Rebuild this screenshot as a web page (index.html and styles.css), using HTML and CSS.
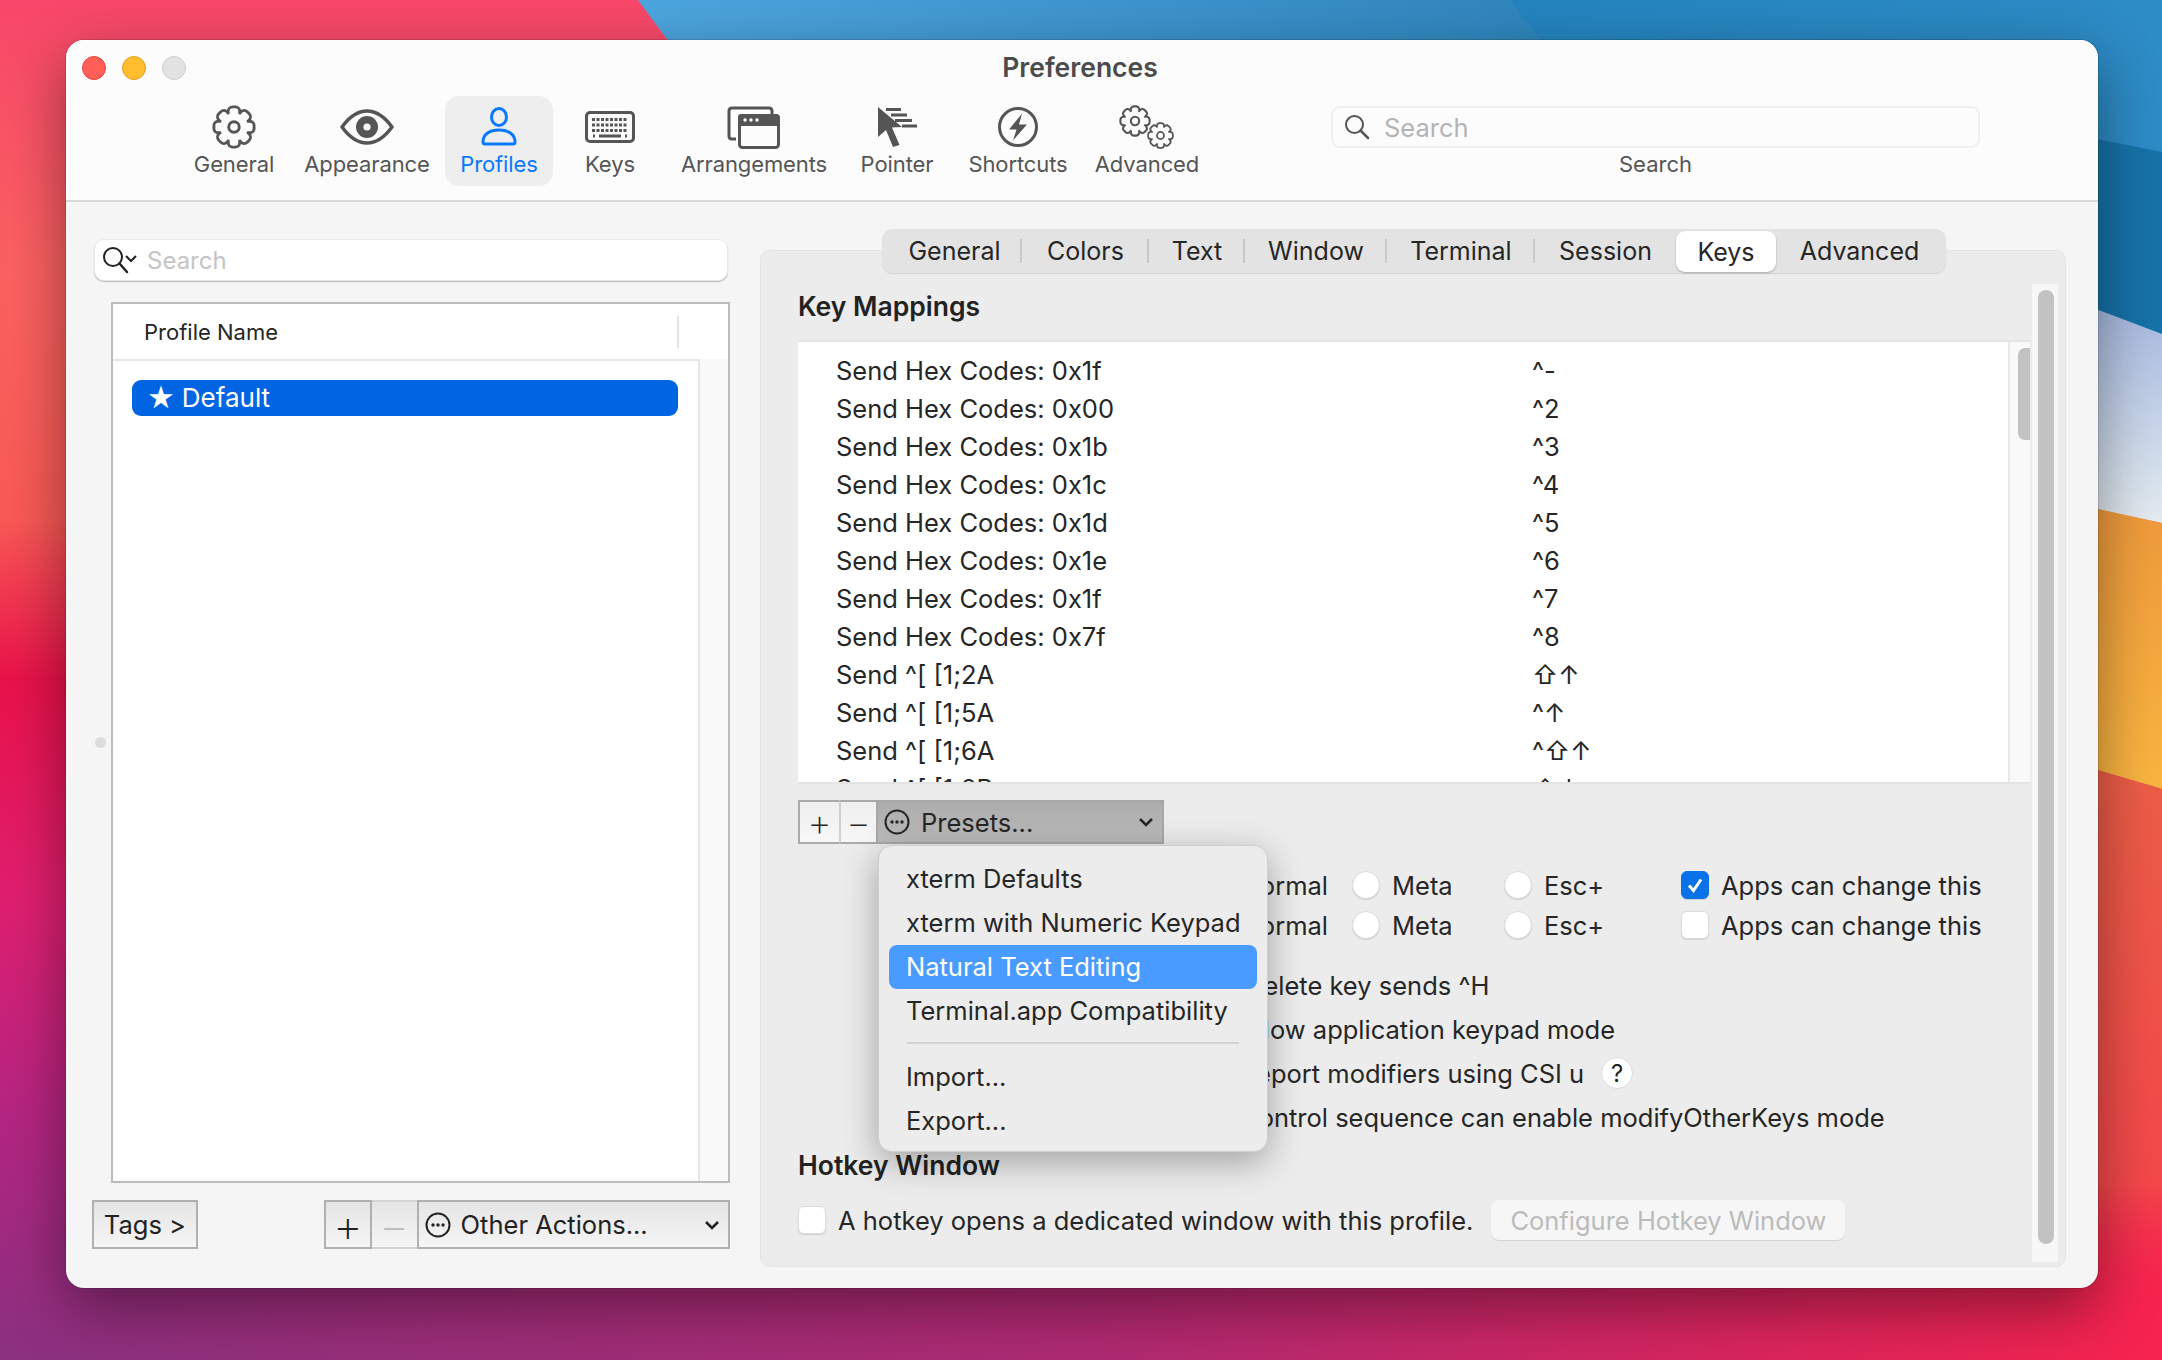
FILE: index.html
```html
<!DOCTYPE html>
<html lang="en">
<head>
    <meta charset="UTF-8">
    <title>Preferences</title>
    <link rel="stylesheet" href="styles.css">
</head>
<body>

<svg class="wallpaper" viewBox="0 0 2162 1360" preserveAspectRatio="none">
    <defs>
        <linearGradient id="w-base" x1="0" y1="0" x2="0" y2="1">
            <stop offset="0" stop-color="#f8476a"/>
            <stop offset=".2" stop-color="#fb6160"/>
            <stop offset=".38" stop-color="#f95a55"/>
            <stop offset=".5" stop-color="#e9124a"/>
            <stop offset=".66" stop-color="#e01f70"/>
            <stop offset=".82" stop-color="#b42582"/>
            <stop offset="1" stop-color="#8a3180"/>
        </linearGradient>
        <linearGradient id="w-hot" x1="0" y1="0" x2="1" y2="0">
            <stop offset="0" stop-color="#f7234e" stop-opacity="0"/>
            <stop offset=".5" stop-color="#f01f5a" stop-opacity=".35"/>
            <stop offset="1" stop-color="#f7234e" stop-opacity="1"/>
        </linearGradient>
        <linearGradient id="w-blue" x1="0" y1="0" x2="1" y2="0">
            <stop offset="0" stop-color="#4da6df"/>
            <stop offset=".7" stop-color="#2b80b8"/>
            <stop offset="1" stop-color="#2b80b8"/>
        </linearGradient>
        <linearGradient id="w-blue2" x1="0" y1="0" x2="1" y2="0">
            <stop offset="0" stop-color="#2484bf"/>
            <stop offset="1" stop-color="#2e8cc6"/>
        </linearGradient>
        <linearGradient id="w-pale" x1="0" y1="0" x2="0" y2="1">
            <stop offset="0" stop-color="#a5b8df"/>
            <stop offset="1" stop-color="#e4ecf1"/>
        </linearGradient>
        <linearGradient id="w-orange" x1="0" y1="0" x2="0" y2="1">
            <stop offset="0" stop-color="#ef9a3c"/>
            <stop offset="1" stop-color="#fab540"/>
        </linearGradient>
        <linearGradient id="w-red" x1="0" y1="0" x2="0" y2="1">
            <stop offset="0" stop-color="#ec5e47"/>
            <stop offset=".7" stop-color="#f4484a" stop-opacity="1"/>
            <stop offset=".92" stop-color="#f7234e" stop-opacity="0"/>
        </linearGradient>
    </defs>
    <rect width="2162" height="1360" fill="url(#w-base)"/>
    <rect y="800" width="2162" height="560" fill="url(#w-hot)"/>
    <polygon points="638,0 760,165 760,340 2162,340 2162,0" fill="url(#w-blue)"/>
    <path d="M1510 0 C1560 70 1620 120 1720 150 L2162 340 L2162 0Z" fill="url(#w-blue2)"/>
    <polygon points="1700,60 2162,152 2162,336 1700,200" fill="#1672a8"/>
    <polygon points="2080,303 2162,334 2162,523 2080,506" fill="url(#w-pale)"/>
    <polygon points="2080,505 2162,523 2162,789 2080,765" fill="url(#w-orange)"/>
    <polygon points="2080,765 2162,789 2162,1360 2080,1360" fill="url(#w-red)"/>
</svg>

<svg class="defs">
    <g id="gear">
        <circle r="14.5"/>
        <rect x="-4.5" y="-19.5" width="9" height="8" rx="3"/>
        <rect x="-4.5" y="-19.5" width="9" height="8" rx="3" transform="rotate(45)"/>
        <rect x="-4.5" y="-19.5" width="9" height="8" rx="3" transform="rotate(90)"/>
        <rect x="-4.5" y="-19.5" width="9" height="8" rx="3" transform="rotate(135)"/>
        <rect x="-4.5" y="-19.5" width="9" height="8" rx="3" transform="rotate(180)"/>
        <rect x="-4.5" y="-19.5" width="9" height="8" rx="3" transform="rotate(225)"/>
        <rect x="-4.5" y="-19.5" width="9" height="8" rx="3" transform="rotate(270)"/>
        <rect x="-4.5" y="-19.5" width="9" height="8" rx="3" transform="rotate(315)"/>
    </g>
    <g id="more">
        <circle cx="13" cy="13" r="11.5" fill="none" stroke="currentColor" stroke-width="2"/>
        <circle cx="8" cy="13" r="1.7" fill="currentColor"/>
        <circle cx="13" cy="13" r="1.7" fill="currentColor"/>
        <circle cx="18" cy="13" r="1.7" fill="currentColor"/>
    </g>
</svg>

<div class="window">
    <header class="header">
        <div class="titlebar">
            <div class="lights">
                <span class="light red"></span>
                <span class="light yellow"></span>
                <span class="light grey"></span>
            </div>
            <div class="title">Preferences</div>
        </div>
        <div class="toolbar">
            <nav class="tools">
                <div class="tool">
                    <svg class="icon gear" width="46" height="46" viewBox="-23 -23 46 46">
                        <use href="#gear" class="gear-edge"/><use href="#gear" class="gear-fill"/><circle class="gear-hub" r="5.5"/>
                    </svg>
                    <span>General</span>
                </div>
                <div class="tool">
                    <svg class="icon" width="54" height="44" viewBox="0 0 54 44">
                        <path d="M2 22 C10 11 18 6 27 6 C36 6 44 11 52 22 C44 33 36 38 27 38 C18 38 10 33 2 22Z" fill="none" stroke="#555" stroke-width="3.5" stroke-linejoin="round"/>
                        <circle cx="27" cy="22" r="11" fill="#555"/>
                        <circle cx="27" cy="22" r="3.6" fill="#fcfcfc"/>
                    </svg>
                    <span>Appearance</span>
                </div>
                <div class="tool active">
                    <svg class="icon" width="38" height="44" viewBox="0 0 38 44">
                        <ellipse cx="19" cy="12" rx="7.5" ry="8.5" fill="none" stroke="#0a78ff" stroke-width="3"/>
                        <path d="M3 37 C3 29 10 25 19 25 C28 25 35 29 35 37 C35 38.500 34.500 39 33 39 L5 39 C3.500 39 3 38.500 3 37Z" fill="none" stroke="#0a78ff" stroke-width="3" stroke-linejoin="round"/>
                    </svg>
                    <span>Profiles</span>
                </div>
                <div class="tool">
                    <svg class="icon" width="50" height="44" viewBox="0 0 50 44">
                        <rect x="1.500" y="7.500" width="47" height="29" rx="3.500" fill="none" stroke="#555" stroke-width="3"/>
                        <path d="M7 14.500 H43 M7 20 H43 M7 25.500 H43" stroke="#555" stroke-width="3" stroke-dasharray="3 1.500" fill="none"/>
                        <path d="M8 31 H10 M14 31 H36 M40 31 H42" stroke="#555" stroke-width="3" fill="none"/>
                    </svg>
                    <span>Keys</span>
                </div>
                <div class="tool">
                    <svg class="icon" width="54" height="44" viewBox="0 0 54 44">
                        <path d="M9 34 H5 Q2 34 2 31 V6 Q2 3 5 3 H42 Q45 3 45 6 V10" fill="none" stroke="#555" stroke-width="3"/>
                        <path d="M14 9 H49 Q53 9 53 13 V21 H11 V12 Q11 9 14 9Z" fill="#555"/>
                        <rect x="12.500" y="10.500" width="39" height="32" rx="3" fill="none" stroke="#555" stroke-width="3"/>
                        <circle cx="18" cy="15" r="1.700" fill="#fff"/><circle cx="24" cy="15" r="1.700" fill="#fff"/><circle cx="30" cy="15" r="1.700" fill="#fff"/>
                    </svg>
                    <span>Arrangements</span>
                </div>
                <div class="tool">
                    <svg class="icon" width="42" height="44" viewBox="0 0 42 44">
                        <path d="M2 2 V32 L10 25 L17 42 L23.500 40 L16 22.500 L26 22Z" fill="#555"/>
                        <path d="M10 4.500 H25 M15 10 H31 M19 15.500 H36 M26 21 H41" stroke="#555" stroke-width="3" fill="none"/>
                    </svg>
                    <span>Pointer</span>
                </div>
                <div class="tool">
                    <svg class="icon" width="44" height="44" viewBox="0 0 44 44">
                        <circle cx="22" cy="22" r="18.500" fill="none" stroke="#555" stroke-width="3"/>
                        <path d="M26 8.500 L13 24.500 H20.500 L17 35.500 L31 19.500 H23Z" fill="#555"/>
                    </svg>
                    <span>Shortcuts</span>
                </div>
                <div class="tool">
                    <svg class="icon" width="56" height="44" viewBox="0 0 56 44">
                        <svg x="0" y="0" width="32" height="32" viewBox="-23 -23 46 46">
                            <use href="#gear" class="gear-edge thin"/><use href="#gear" class="gear-fill"/><circle class="gear-hub" r="6"/>
                        </svg>
                        <svg x="28" y="17" width="27" height="27" viewBox="-23 -23 46 46">
                            <use href="#gear" class="gear-edge thin"/><use href="#gear" class="gear-fill"/><circle class="gear-hub" r="6"/>
                        </svg>
                    </svg>
                    <span>Advanced</span>
                </div>
            </nav>
            <div class="toolbar-search">
                <div class="tb-field">
                    <svg width="26" height="26" viewBox="0 0 26 26">
                        <circle cx="10.500" cy="10.500" r="8.500" fill="none" stroke="#555" stroke-width="2"/>
                        <path d="M16.500 16.500 L24 24" stroke="#555" stroke-width="2.500" stroke-linecap="round"/>
                    </svg>
                    <span>Search</span>
                </div>
                <div class="tb-label">Search</div>
            </div>
        </div>
    </header>

    <div class="content">
        <aside class="profiles">
            <div class="search">
                <svg width="36" height="28" viewBox="0 0 36 28">
                    <circle cx="11" cy="11" r="9" fill="none" stroke="#222" stroke-width="2"/>
                    <path d="M17.500 17.500 L25 26" stroke="#222" stroke-width="2.500" stroke-linecap="round"/>
                    <path d="M24 10 L29 15 L34 10" fill="none" stroke="#222" stroke-width="2"/>
                </svg>
                <span>Search</span>
            </div>
            <div class="table-wrap">
                <span class="split-dot"></span>
                <div class="profile-table">
                    <div class="profile-head"><span>Profile Name</span></div>
                    <div class="profile-body">
                        <div class="profile-list">
                            <div class="profile-row"><span class="star">★</span> Default</div>
                        </div>
                        <div class="profile-gutter"></div>
                    </div>
                </div>
            </div>
            <div class="profile-actions">
                <div class="btn tags">Tags &gt;</div>
                <div class="btn square">+</div>
                <div class="btn square off">−</div>
                <div class="btn actions">
                    <svg class="more" width="26" height="26" viewBox="0 0 26 26"><use href="#more"/></svg>
                    <span>Other Actions...</span>
                    <svg class="chev" width="16" height="12" viewBox="0 0 16 12"><path d="M2 3 L8 9 L14 3" fill="none" stroke="currentColor" stroke-width="2.600"/></svg>
                </div>
            </div>
        </aside>

        <section class="prefs">
            <div class="panel">
                <div class="tabs">
                    <div class="tab sep">General</div>
                    <div class="tab sep">Colors</div>
                    <div class="tab sep">Text</div>
                    <div class="tab sep">Window</div>
                    <div class="tab sep">Terminal</div>
                    <div class="tab">Session</div>
                    <div class="tab selected">Keys</div>
                    <div class="tab">Advanced</div>
                </div>
                <div class="panel-body">
                    <div class="panel-main">
                        <h2 class="heading">Key Mappings</h2>
                        <div class="keymap">
                            <div class="keymap-rows">
                                <div class="key-row"><span>Send Hex Codes: 0x1f</span><span>^-</span></div>
                                <div class="key-row"><span>Send Hex Codes: 0x00</span><span>^2</span></div>
                                <div class="key-row"><span>Send Hex Codes: 0x1b</span><span>^3</span></div>
                                <div class="key-row"><span>Send Hex Codes: 0x1c</span><span>^4</span></div>
                                <div class="key-row"><span>Send Hex Codes: 0x1d</span><span>^5</span></div>
                                <div class="key-row"><span>Send Hex Codes: 0x1e</span><span>^6</span></div>
                                <div class="key-row"><span>Send Hex Codes: 0x1f</span><span>^7</span></div>
                                <div class="key-row"><span>Send Hex Codes: 0x7f</span><span>^8</span></div>
                                <div class="key-row"><span>Send ^[ [1;2A</span><span>⇧↑</span></div>
                                <div class="key-row"><span>Send ^[ [1;5A</span><span>^↑</span></div>
                                <div class="key-row"><span>Send ^[ [1;6A</span><span>^⇧↑</span></div>
                                <div class="key-row"><span>Send ^[ [1;2B</span><span>⇧↓</span></div>
                            </div>
                            <div class="keymap-scroll"><div class="keymap-thumb"></div></div>
                        </div>

                        <div class="presets-bar">
                            <div class="seg plus">+</div>
                            <div class="seg minus">−</div>
                            <div class="presets">
                                <svg class="more" width="26" height="26" viewBox="0 0 26 26"><use href="#more"/></svg>
                                <span>Presets...</span>
                                <svg class="chev" width="16" height="12" viewBox="0 0 16 12"><path d="M2 3 L8 9 L14 3" fill="none" stroke="currentColor" stroke-width="2.600"/></svg>
                            </div>
                            <div class="menu">
                                <div class="menu-item">xterm Defaults</div>
                                <div class="menu-item">xterm with Numeric Keypad</div>
                                <div class="menu-item hl">Natural Text Editing</div>
                                <div class="menu-item">Terminal.app Compatibility</div>
                                <div class="menu-sep"></div>
                                <div class="menu-item">Import...</div>
                                <div class="menu-item">Export...</div>
                            </div>
                        </div>

                        <div class="option-keys">
                            <div class="option-row">
                                <div class="opt-name">Left Option Key: <span>Normal</span></div>
                                <label class="opt"><span class="radio"></span>Meta</label>
                                <label class="opt"><span class="radio"></span>Esc+</label>
                                <label class="opt"><span class="box checked"><svg width="20" height="20" viewBox="0 0 20 20"><path d="M4 10.500 L8.500 15.500 L16 4.500" fill="none" stroke="#fff" stroke-width="3"/></svg></span>Apps can change this</label>
                            </div>
                            <div class="option-row">
                                <div class="opt-name">Right Option Key: <span>Normal</span></div>
                                <label class="opt"><span class="radio"></span>Meta</label>
                                <label class="opt"><span class="radio"></span>Esc+</label>
                                <label class="opt"><span class="box"></span>Apps can change this</label>
                            </div>
                        </div>

                        <div class="flags">
                            <label class="flag delete"><span class="box"></span>Delete key sends ^H</label>
                            <label class="flag"><span class="box"></span>Allow application keypad mode</label>
                            <label class="flag"><span class="box"></span>Report modifiers using CSI u<span class="help">?</span></label>
                            <label class="flag"><span class="box"></span>Control sequence can enable modifyOtherKeys mode</label>
                        </div>

                        <h2 class="heading hotkey">Hotkey Window</h2>
                        <div class="hotkey-row">
                            <label class="opt"><span class="box"></span>A hotkey opens a dedicated window with this profile.</label>
                            <div class="btn-configure">Configure Hotkey Window</div>
                        </div>
                    </div>
                    <div class="panel-scroll"><div class="panel-thumb"></div></div>
                </div>
            </div>
        </section>
    </div>
</div>

</body>
</html>
```

FILE: styles.css
```css
html, body {
    margin: 0;
    height: 1360px;
    overflow: hidden;
}

body {
    position: relative;
    font-family: Inter, "Noto Sans", "DejaVu Sans", sans-serif;
    color: #262626;
    background: #b42582;
}

.wallpaper {
    position: absolute;
    left: 0;
    top: 0;
    width: 2162px;
    height: 1360px;
}

.defs {
    position: absolute;
    width: 0;
    height: 0;
}

.window {
    position: absolute;
    left: 66px;
    top: 40px;
    width: 2032px;
    height: 1248px;
    border-radius: 18px;
    overflow: hidden;
    background: #f5f5f5;
    box-shadow: 0 20px 60px rgba(0, 0, 0, 0.42), 0 0 0 1px rgba(0, 0, 0, 0.12);
}

/* header */
.header {
    height: 160px;
    background: #fcfcfc;
    border-bottom: 2px solid #d8d8d8;
}

.titlebar {
    display: grid;
    grid-template-columns: 1fr auto 1fr;
    align-items: center;
    height: 54px;
    padding-bottom: 2px;
}

.lights {
    display: flex;
    gap: 16px;
    padding: 2px 0 0 16px;
}

.light {
    width: 24px;
    height: 24px;
    border-radius: 50%;
    box-sizing: border-box;
}

.red { background: #ff5f57; border: 1px solid #e2463f; }
.yellow { background: #febc2e; border: 1px solid #dfa023; }
.grey { background: #e2e2e2; border: 1px solid #cfcfcf; }

.title {
    font-size: 26.5px;
    font-weight: 600;
    color: #4b4b4b;
    margin-left: -4px;
}

.toolbar {
    display: flex;
    padding-left: 113px;
}

.tools {
    display: grid;
    grid-template-columns: 110px 156px 108px 114px 174px 112px 130px 128px;
    height: 90px;
}

.tool {
    display: flex;
    flex-direction: column;
    align-items: center;
    padding-top: 9px;
    box-sizing: border-box;
    font-size: 22px;
    letter-spacing: -0.1px;
    color: #555;
    border-radius: 14px;
}

.tool span {
    line-height: 30px;
}

.tool .icon {
    height: 44px;
}

.tool.active {
    background: #eeeeee;
    color: #0a78ff;
}

.gear-edge {
    fill: #555;
    stroke: #555;
    stroke-width: 6;
    stroke-linejoin: round;
}

.gear-fill {
    fill: #fcfcfc;
    stroke: none;
}

.gear-hub {
    fill: none;
    stroke: #555;
    stroke-width: 3;
}

.toolbar-search {
    width: 649px;
    margin-left: 120px;
    padding-top: 10px;
}

.tb-field {
    display: flex;
    align-items: center;
    gap: 14px;
    box-sizing: border-box;
    height: 42px;
    padding-left: 11px;
    border: 2px solid #efefef;
    border-radius: 9px;
    font-size: 25.5px;
    color: #b4b4b4;
}

.tb-label {
    margin-top: 1px;
    line-height: 30px;
    text-align: center;
    font-size: 22px;
    color: #555;
}

/* main area */
.content {
    display: flex;
}

.profiles {
    width: 638px;
    margin-left: 26px;
    padding-top: 37px;
}

.search {
    display: flex;
    align-items: center;
    gap: 9px;
    box-sizing: border-box;
    width: 634px;
    height: 42px;
    margin-left: 2px;
    padding-left: 7px;
    background: #fff;
    border-radius: 10px;
    border: 1px solid #e9e9e9;
    box-shadow: 0 1px 1px #b5b5b5;
    font-size: 24px;
    color: #c4c4c4;
}

.table-wrap {
    display: flex;
    align-items: center;
    margin-top: 21px;
}

.split-dot {
    width: 11px;
    height: 11px;
    margin: 0 5px 0 3px;
    border-radius: 50%;
    background: #dcdcdc;
}

.profile-table {
    display: flex;
    flex-direction: column;
    box-sizing: border-box;
    width: 619px;
    height: 881px;
    background: #fff;
    border: 2px solid #bcbcbc;
}

.profile-head {
    box-sizing: border-box;
    height: 55px;
    padding: 12px 0 0 31px;
    flex: none;
}

.profile-head span {
    display: block;
    width: 533px;
    line-height: 32px;
    font-size: 22px;
    border-right: 2px solid #e4e4e4;
}

.profile-body {
    flex: 1;
    display: flex;
}

.profile-list {
    width: 587px;
    padding: 19px 0 0 19px;
    box-sizing: border-box;
    border-top: 2px solid #e6e6e6;
    border-right: 2px solid #e6e6e6;
}

.profile-gutter {
    flex: 1;
    background: #f9f9f9;
}

.profile-row {
    display: flex;
    align-items: center;
    gap: 7px;
    box-sizing: border-box;
    width: 546px;
    height: 36px;
    padding: 0 0 2px 15px;
    border-radius: 9px;
    background: #0165e3;
    color: #fff;
    font-size: 26px;
}

.star {
    font-family: "DejaVu Sans", sans-serif;
    font-size: 31px;
    line-height: 34px;
}

.profile-actions {
    display: flex;
    margin-top: 17px;
    height: 49px;
    color: #222;
}

.btn {
    display: flex;
    align-items: center;
    box-sizing: border-box;
    height: 49px;
    border: 2px solid #b0b0b0;
    background: linear-gradient(#e5e5e5, #f5f5f5);
    font-size: 25.5px;
}

.tags {
    width: 106px;
    justify-content: center;
    margin-right: 126px;
}

.square {
    width: 48px;
    justify-content: center;
    font-size: 46px;
    font-weight: 200;
}

.square.off {
    width: 45px;
    border: 0;
    border-bottom: 2px solid #d4d4d4;
    border-top: 2px solid #d4d4d4;
    color: #bdbdbd;
}

.actions {
    width: 314px;
    gap: 10px;
    padding-left: 6px;
}

.chev {
    margin-left: auto;
    flex: none;
}

.actions .chev {
    margin-right: 8px;
}

/* right side */
.prefs {
    width: 1306px;
    margin-left: 30px;
}

.panel {
    box-sizing: border-box;
    height: 1017px;
    margin-top: 48px;
    background: #ececec;
    border: 1px solid #e4e4e4;
    border-radius: 10px;
}

.tabs {
    display: grid;
    grid-template-columns: 140px 127px 96px 142px 148px 141px 100px 170px;
    width: 1064px;
    height: 44px;
    margin: -22px 0 0 121px;
    background: #e3e3e3;
    border-radius: 11px;
    box-shadow: 0 1px 1px #d4d4d4;
}

.tab {
    display: flex;
    align-items: center;
    justify-content: center;
    font-size: 25px;
}

.tab:first-child {
    padding-left: 5px;
}

.tab:last-child {
    padding-right: 3px;
}

.tab.sep {
    background: linear-gradient(#c9c9c9, #c9c9c9) right center / 2px 24px no-repeat;
}

.tab.selected {
    margin: 2px 0 1px;
    background: #fff;
    border-radius: 9px;
    box-shadow: 0 1px 2px rgba(0, 0, 0, 0.25);
}

.panel-body {
    display: flex;
}

.panel-main {
    width: 1232px;
    margin-left: 37px;
    padding-top: 16px;
}

.heading {
    margin: 0;
    font-size: 26.5px;
    font-weight: 600;
    line-height: 34px;
    color: #222;
}

.keymap {
    display: flex;
    height: 440px;
    margin-top: 17px;
    overflow: hidden;
    background: #fff;
    border-top: 2px solid #e4e4e4;
    border-bottom: 2px solid #e4e4e4;
}

.keymap-rows {
    width: 1210px;
    padding-top: 10px;
    box-sizing: border-box;
}

.key-row {
    display: grid;
    grid-template-columns: 696px auto;
    height: 38px;
    line-height: 38px;
    padding-left: 38px;
    font-size: 25.5px;
    font-family: Inter, "DejaVu Sans", sans-serif;
}

.keymap-scroll {
    flex: 1;
    padding: 6px 0 0 8px;
    background: #f9f9f9;
    border-left: 2px solid #e9e9e9;
}

.keymap-thumb {
    height: 92px;
    background: #c2c2c2;
    border-radius: 7px 0 0 7px;
}

.presets-bar {
    position: relative;
    display: flex;
    height: 44px;
    margin-top: 16px;
    font-size: 25.5px;
}

.seg {
    display: flex;
    align-items: center;
    justify-content: center;
    box-sizing: border-box;
    border: 2px solid #aaaaaa;
    border-right: 0;
    background: linear-gradient(#efefef, #f7f7f7);
    font-size: 38px;
    font-weight: 200;
}

.seg.plus {
    width: 41px;
}

.seg.minus {
    width: 37px;
    border-left: 2px solid #cfcfcf;
}

.presets {
    display: flex;
    align-items: center;
    gap: 11px;
    box-sizing: border-box;
    width: 288px;
    padding-left: 6px;
    background: linear-gradient(#acacac, #bcbcbc);
    border: 2px solid #a8a8a8;
}

.presets .chev {
    margin-right: 8px;
}

.menu {
    position: absolute;
    left: 80px;
    top: 45px;
    z-index: 5;
    box-sizing: border-box;
    width: 390px;
    height: 307px;
    padding: 11px 10px;
    background: #ececec;
    border-radius: 14px;
    border: 1px solid #cfcfcf;
    box-shadow: 0 10px 36px rgba(0, 0, 0, 0.32);
    font-size: 25.5px;
}

.menu-item {
    height: 44px;
    line-height: 44px;
    padding-left: 17px;
    border-radius: 8px;
}

.menu-item.hl {
    background: #4a9bff;
    color: #fff;
}

.menu-sep {
    height: 2px;
    margin: 9px 18px 11px 18px;
    background: #d2d2d2;
}

.option-keys {
    margin-top: 21px;
    font-size: 25.5px;
}

.option-row {
    display: grid;
    grid-template-columns: 554px 152px 177px auto;
    height: 40px;
    align-items: center;
}

.opt-name {
    display: flex;
    justify-content: flex-end;
    gap: 70px;
    padding-right: 24px;
}

.opt {
    display: flex;
    align-items: center;
    gap: 12px;
    font-size: 25.5px;
}

.radio {
    flex: none;
    width: 28px;
    height: 28px;
    border-radius: 50%;
    box-sizing: border-box;
    background: #fff;
    border: 1px solid #dcdcdc;
    box-shadow: 0 1px 1px #cfcfcf;
}

.box {
    display: flex;
    align-items: center;
    justify-content: center;
    flex: none;
    width: 28px;
    height: 28px;
    border-radius: 6px;
    box-sizing: border-box;
    background: #fff;
    border: 1px solid #dcdcdc;
    box-shadow: 0 1px 1px #cfcfcf;
}

.box.checked {
    background: #0a72e8;
    border-color: #0a72e8;
}

.flags {
    margin-top: 18px;
    padding-left: 402px;
    font-size: 25.5px;
}

.flag {
    display: flex;
    align-items: center;
    gap: 12px;
    height: 44px;
}

.flag.delete {
    padding-left: 5px;
}

.help {
    display: flex;
    align-items: center;
    justify-content: center;
    width: 32px;
    height: 32px;
    margin-left: 5px;
    border-radius: 50%;
    background: #fff;
    border: 1px solid #dcdcdc;
    box-sizing: border-box;
    font-size: 24px;
}

.heading.hotkey {
    margin-top: 9px;
}

.hotkey-row {
    display: flex;
    align-items: center;
    gap: 18px;
    height: 40px;
    margin-top: 18px;
}

.btn-configure {
    display: flex;
    align-items: center;
    justify-content: center;
    width: 354px;
    height: 40px;
    background: #f6f6f6;
    border-radius: 8px;
    box-shadow: 0 1px 1px #d4d4d4;
    color: #bbb;
    font-size: 25.5px;
}

.panel-scroll {
    box-sizing: border-box;
    width: 26px;
    height: 978px;
    margin: 11px 0 0 2px;
    padding: 6px 4px 0 6px;
    background: #f7f7f7;
}

.panel-thumb {
    height: 954px;
    background: #c2c2c2;
    border-radius: 8px;
}
```
